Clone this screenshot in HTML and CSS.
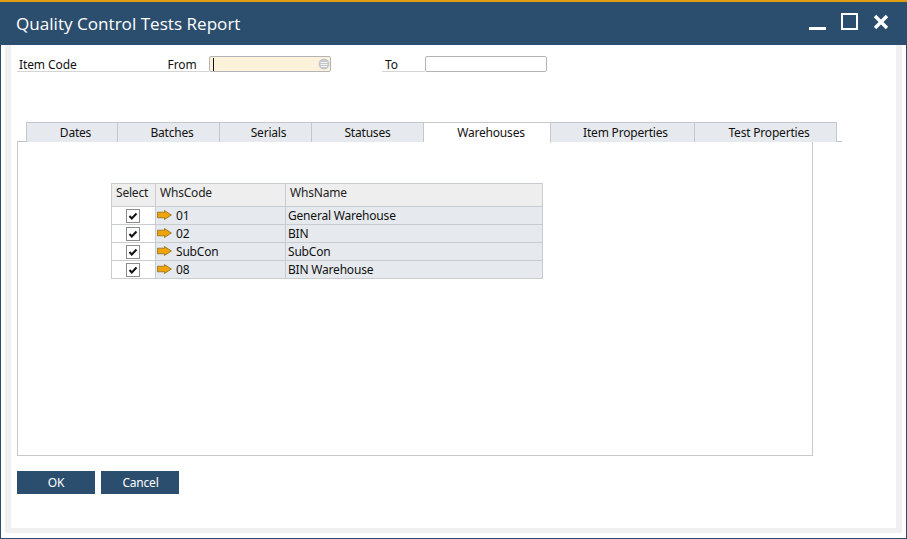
FILE: index.html
```html
<!DOCTYPE html>
<html>
<head>
<meta charset="utf-8">
<link rel="stylesheet" href="styles.css">
<title>Quality Control Tests Report</title>
</head>
<body>
<div class="window">
  <div class="titlebar">
    <span class="title">Quality Control Tests Report</span>
    <div class="controls">
      <svg width="18" height="18" viewBox="0 0 18 18"><rect x="0" y="14" width="17" height="3" fill="#fff"/></svg>
      <svg width="18" height="18" viewBox="0 0 18 18"><rect x="1" y="1" width="15" height="15" fill="none" stroke="#fff" stroke-width="2"/></svg>
      <svg width="16" height="16" viewBox="0 0 16 16"><path d="M2 2L14 14M14 2L2 14" stroke="#fff" stroke-width="3.4" fill="none"/></svg>
    </div>
  </div>
  <div class="frame">
    <div class="content">
      <div class="criteria">
        <div class="label label-code">Item Code<span class="from">From</span></div>
        <div class="field field-active">
          <span class="caret"></span>
          <svg class="lookup" width="12" height="12" viewBox="0 0 12 12"><circle cx="6" cy="6" r="5.5" fill="#c4c8cc"/><path d="M2.5 4.5H9.5M2.5 6.5H9.5M3 8.5H9" stroke="#f2f2f2" stroke-width="1"/></svg>
        </div>
        <div class="label label-to">To</div>
        <div class="field"></div>
      </div>

      <div class="tabs">
        <div class="tab tab-dates">Dates</div>
        <div class="tab tab-batches">Batches</div>
        <div class="tab tab-serials">Serials</div>
        <div class="tab tab-statuses">Statuses</div>
        <div class="tab tab-whs active">Warehouses</div>
        <div class="tab tab-item">Item Properties</div>
        <div class="tab tab-test">Test Properties</div>
      </div>

      <div class="panel">
        <table class="grid">
          <tr>
            <th class="col-select">Select</th>
            <th class="col-code">WhsCode</th>
            <th class="col-name">WhsName</th>
          </tr>
          <tr>
            <td class="cell-check"><span class="check"><svg width="10" height="10" viewBox="0 0 10 10"><path d="M1.5 5L3.8 7.5L8.5 2.5" fill="none" stroke="#111" stroke-width="2"/></svg></span></td>
            <td><svg class="arrow" width="15" height="10" viewBox="0 0 15 10"><path d="M.5 2.2H7.5V.5L14.4 5L7.5 9.5V7.8H.5Z" fill="#f0a30a" stroke="#8a6d20" stroke-width=".8"/></svg>01</td>
            <td>General Warehouse</td>
          </tr>
          <tr>
            <td class="cell-check"><span class="check"><svg width="10" height="10" viewBox="0 0 10 10"><path d="M1.5 5L3.8 7.5L8.5 2.5" fill="none" stroke="#111" stroke-width="2"/></svg></span></td>
            <td><svg class="arrow" width="15" height="10" viewBox="0 0 15 10"><path d="M.5 2.2H7.5V.5L14.4 5L7.5 9.5V7.8H.5Z" fill="#f0a30a" stroke="#8a6d20" stroke-width=".8"/></svg>02</td>
            <td>BIN</td>
          </tr>
          <tr>
            <td class="cell-check"><span class="check"><svg width="10" height="10" viewBox="0 0 10 10"><path d="M1.5 5L3.8 7.5L8.5 2.5" fill="none" stroke="#111" stroke-width="2"/></svg></span></td>
            <td><svg class="arrow" width="15" height="10" viewBox="0 0 15 10"><path d="M.5 2.2H7.5V.5L14.4 5L7.5 9.5V7.8H.5Z" fill="#f0a30a" stroke="#8a6d20" stroke-width=".8"/></svg>SubCon</td>
            <td>SubCon</td>
          </tr>
          <tr>
            <td class="cell-check"><span class="check"><svg width="10" height="10" viewBox="0 0 10 10"><path d="M1.5 5L3.8 7.5L8.5 2.5" fill="none" stroke="#111" stroke-width="2"/></svg></span></td>
            <td><svg class="arrow" width="15" height="10" viewBox="0 0 15 10"><path d="M.5 2.2H7.5V.5L14.4 5L7.5 9.5V7.8H.5Z" fill="#f0a30a" stroke="#8a6d20" stroke-width=".8"/></svg>08</td>
            <td>BIN Warehouse</td>
          </tr>
        </table>
      </div>

      <div class="buttons">
        <button class="btn">OK</button>
        <button class="btn btn-cancel">Cancel</button>
      </div>
    </div>
  </div>
</div>
</body>
</html>
```

FILE: styles.css
```css
html, body { margin: 0; padding: 0; }

body {
  width: 907px;
  height: 539px;
  overflow: hidden;
  background: #fff;
  color: #111;
  font-family: "Noto Sans", "Liberation Sans", sans-serif;
  font-size: 12px;
}

.window {
  box-sizing: border-box;
  width: 907px;
  height: 539px;
  border: 1px solid #2c4e6e;
  border-top: 0;
  display: flex;
  flex-direction: column;
}

.titlebar {
  box-sizing: border-box;
  height: 45px;
  margin: 0 -1px;
  background: #2c4e6e;
  border-top: 2px solid #e09f10;
  display: flex;
  align-items: center;
  justify-content: space-between;
  padding: 0 18px 0 16px;
  color: #fff;
}

.title {
  font-family: "Open Sans", "Noto Sans", sans-serif;
  font-size: 17.1px;
}

.controls {
  display: flex;
  align-items: center;
  gap: 14px;
  margin-top: -3px;
}

.frame {
  flex: 1;
  padding: 0 4px 5px 4px;
  display: flex;
}

.content {
  flex: 1;
  background: #fff;
  border-left: 6px solid #f0f0f0;
  border-right: 6px solid #f0f0f0;
  border-bottom: 5px solid #f0f0f0;
  padding: 11px 0 0 6px;
}

/* selection fields above the tabs */
.criteria {
  display: flex;
  align-items: flex-start;
  height: 66px;
}

.label {
  box-sizing: border-box;
  height: 16px;
  line-height: 17px;
  border-bottom: 1px solid #d4d4d4;
  letter-spacing: -.1px;
}

.label-code {
  width: 192px;
  padding-left: 2px;
  display: flex;
}

.from { margin-left: 91px; }

.label-to {
  width: 43px;
  margin-left: 51px;
  padding-left: 3px;
}

.field {
  box-sizing: border-box;
  width: 122px;
  height: 16px;
  border: 1px solid #b4b4b4;
  border-radius: 2px;
  background: #fff;
  position: relative;
}

.field-active {
  background: #fdf3dc;
}

.caret {
  position: absolute;
  left: 3px;
  top: 1px;
  width: 1px;
  height: 13px;
  background: #111;
}

.lookup {
  position: absolute;
  right: 0;
  top: 1px;
}

/* tabs */
.tabs {
  display: flex;
  box-sizing: border-box;
  height: 20px;
  width: 825px;
  padding-left: 9px;
  border-bottom: 1px solid #c4c4c4;
}

.tab {
  box-sizing: border-box;
  height: 20px;
  padding-left: 7px;
  background: #e6eaee;
  border-top: 1px solid #c4c8cc;
  border-right: 1px solid #c4c8cc;
  text-align: center;
  line-height: 19px;
  letter-spacing: -.2px;
}

.tab-dates { width: 92px; border-left: 1px solid #c4c8cc; }
.tab-batches { width: 102px; }
.tab-serials { width: 92px; padding-left: 6px; }
.tab-statuses { width: 112px; padding-left: 0; }
.tab-whs { width: 127px; padding-left: 8px; }
.tab-item { width: 144px; padding-left: 6px; }
.tab-test { width: 142px; }

.tab.active {
  background: #fff;
  position: relative;
  z-index: 1;
  height: 21px;
}

.panel {
  box-sizing: border-box;
  width: 796px;
  height: 314px;
  border: 1px solid #c8c8c8;
  border-top: 0;
  padding: 41px 0 0 93px;
}

/* warehouse matrix */
.grid {
  border-collapse: collapse;
  table-layout: fixed;
  width: 431px;
  letter-spacing: -.2px;
}

.grid th, .grid td {
  box-sizing: border-box;
  border: 1px solid #c8ccd0;
  padding: 0 2px;
  white-space: nowrap;
  overflow: hidden;
}

.grid th {
  height: 23px;
  background: #eeeeee;
  font-weight: normal;
  text-align: left;
  padding: 0 0 5px 4px;
  color: #222;
}

.grid td {
  height: 18px;
  background: #e6eaee;
  line-height: 16px;
}

.col-select { width: 44px; }
.col-code { width: 130px; }
.col-name { width: 257px; }

.grid td.cell-check {
  background: #fff;
  text-align: center;
  padding: 0;
}

.check {
  box-sizing: border-box;
  display: inline-flex;
  align-items: center;
  justify-content: center;
  width: 14px;
  height: 14px;
  border: 1px solid #8c8c8c;
  background: #fff;
  vertical-align: middle;
  margin-right: 1px;
}

.arrow {
  vertical-align: 0;
  margin-right: 4px;
}

.grid td:nth-child(2) { padding-left: 1px; }

.buttons {
  display: flex;
  gap: 6px;
  margin-top: 15px;
}

.btn {
  width: 78px;
  height: 23px;
  padding: 0;
  border: 0;
  background: #2c4e6e;
  color: #fff;
  font-family: inherit;
  font-size: 12px;
  letter-spacing: -.2px;
}

.btn-cancel { padding-left: 1px; }
```
